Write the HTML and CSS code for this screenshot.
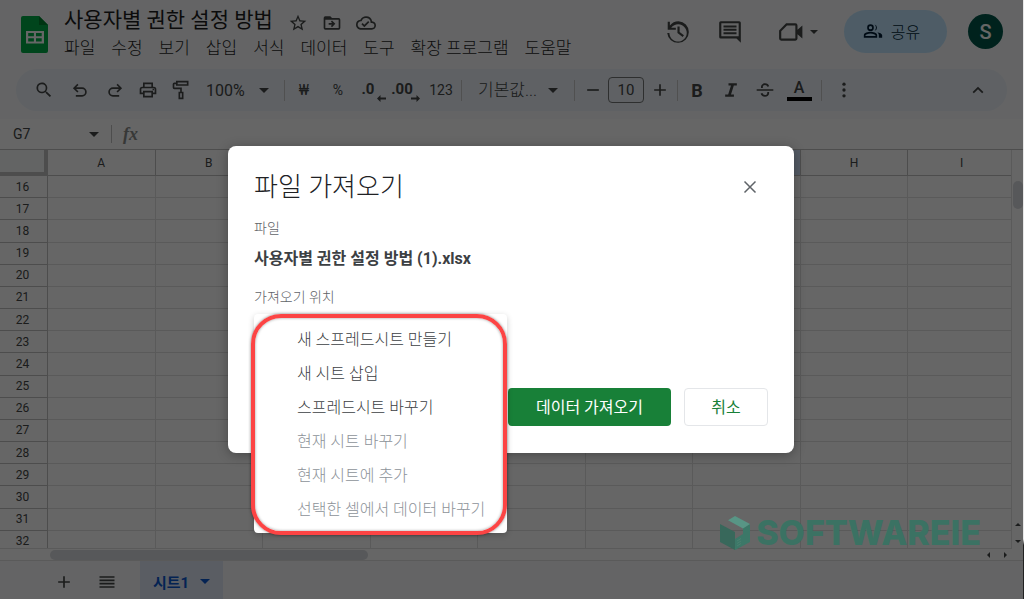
FILE: index.html
```html
<!DOCTYPE html>
<html lang="ko">
<head>
<meta charset="utf-8">
<title>사용자별 권한 설정 방법</title>
<meta name="viewport" content="width=device-width, initial-scale=1">
<link rel="stylesheet" href="styles.css">
</head>
<body>
<div class="app">
  <header class="header">
    <svg class="logo" viewBox="0 0 27 37" aria-hidden="true"><path fill="#00ac47" d="M2 0H18L27 9V35Q27 37 25 37H2Q0 37 0 35V2Q0 0 2 0Z"/><path fill="#00832d" d="M18 0L27 9H18Z"/><path fill="#fff" fill-rule="evenodd" d="M5 15H23V27.500H5ZM7.200 17V20.200H12.900V17ZM15 17V20.200H20.700V17ZM7.200 22.200V25.400H12.900V22.200ZM15 22.200V25.400H20.700V22.200Z"/></svg>
    <div class="doc">
      <div class="doc-line">
        <h1 class="doc-title">사용자별 권한 설정 방법</h1>
        <button class="mini" aria-label="별표"><svg viewBox="0 0 24 24"><path d="M22 9.240l-7.190-.620L12 2 9.190 8.630 2 9.240l5.460 4.730L5.820 21 12 17.270 18.180 21l-1.630-7.030zM12 15.400l-3.760 2.270 1-4.280-3.320-2.880 4.380-.380L12 6.100l1.710 4.040 4.380.380-3.320 2.880 1 4.280z"/></svg></button>
        <button class="mini" aria-label="이동"><svg viewBox="0 0 24 24"><path d="M20 6h-8l-2-2H4a2 2 0 0 0-2 2v12a2 2 0 0 0 2 2h16a2 2 0 0 0 2-2V8a2 2 0 0 0-2-2zm0 12H4V8h16zm-8-1 4-4-4-4-1.400 1.400 1.600 1.600H8v2h4.200l-1.600 1.600z"/></svg></button>
        <button class="mini" aria-label="문서 상태"><svg viewBox="0 0 24 24"><path d="M19.350 10.040A7.490 7.490 0 0 0 12 4C9.110 4 6.600 5.640 5.350 8.040A5.994 5.994 0 0 0 0 14c0 3.310 2.690 6 6 6h13c2.760 0 5-2.240 5-5 0-2.640-2.050-4.780-4.650-4.960zM19 18H6c-2.210 0-4-1.790-4-4s1.790-4 4-4h.710A5.500 5.500 0 0 1 17.500 11.500v.500H19a3 3 0 0 1 0 6zm-9-3.820-2.090-2.090L6.500 13.500 10 17l6.010-6.010-1.410-1.410z"/></svg></button>
      </div>
      <nav class="menus">
        <button>파일</button><button>수정</button><button>보기</button><button>삽입</button><button>서식</button><button>데이터</button><button>도구</button><button>확장 프로그램</button><button>도움말</button>
      </nav>
    </div>
    <div class="actions">
      <button class="round" aria-label="버전 기록"><svg viewBox="0 0 24 24"><path d="M12.500 2A10 10 0 0 0 4.500 6V2.500h-2V10H10V8H5.700A8 8 0 1 1 4.060 13H2.040A10 10 0 1 0 12.500 2zM11.500 7v6l4.800 3.600 1.200-1.600-4-3V7z"/></svg></button>
      <button class="round" aria-label="댓글"><svg viewBox="0 0 24 24"><path d="M22 3.500A1.500 1.500 0 0 0 20.500 2h-17A1.500 1.500 0 0 0 2 3.500v13A1.500 1.500 0 0 0 3.500 18H18l4 4zM20 16H4V4h16zM6 6h12v1.800H6zm0 3.100h12v1.800H6zm0 3.100h12V14H6z"/></svg></button>
      <button class="round meet" aria-label="화상 회의"><svg viewBox="0 0 24 24"><path fill-rule="evenodd" d="M7.500 4H16a2 2 0 0 1 2 2v4l4.500-4v12L18 14v4a2 2 0 0 1-2 2H3a2 2 0 0 1-2-2v-7.500zM8.300 6 3 11.300V18h13V6z"/></svg><i class="caret"></i></button>
      <button class="share"><svg viewBox="0 0 24 24" aria-hidden="true"><path fill-rule="evenodd" d="M9 4a4 4 0 1 0 0 8 4 4 0 0 0 0-8zm0 2a2 2 0 1 1 0 4 2 2 0 0 1 0-4zM1 17c0-2.700 5.300-4 8-4s8 1.300 8 4v3H1zm2 1h12v-1c0-.600-3.100-2-6-2s-6 1.400-6 2zM14 4.200a4 4 0 0 1 0 7.600 6 6 0 0 0 0-7.600zM17 13.400c2.800.500 6 1.700 6 3.600v3h-4v-3c0-1.500-.8-2.700-2-3.600z"/></svg>공유</button>
      <button class="avatar" aria-label="계정">S</button>
    </div>
  </header>

  <div class="toolbar">
    <button class="tool" aria-label="검색"><svg viewBox="0 0 24 24"><path d="M15.500 14h-.8l-.3-.3a6.500 6.500 0 1 0-.7.700l.3.300v.8l5 5 1.500-1.500zm-6 0a4.500 4.500 0 1 1 0-9 4.500 4.500 0 0 1 0 9z"/></svg></button>
    <button class="tool wide" aria-label="실행취소"><svg viewBox="0 0 24 24"><path d="M7 20v-2h7.500a3.600 3.600 0 0 0 0-7.200H7.300l2.900 2.900-1.400 1.400L3.500 9.800l5.300-5.300 1.400 1.400-2.900 2.900h7.200a5.600 5.600 0 0 1 0 11.200z"/></svg></button>
    <button class="tool redo" aria-label="재실행"><svg viewBox="0 0 24 24"><path d="M17 20v-2H9.500a3.600 3.600 0 0 1 0-7.200h7.200l-2.900 2.900 1.400 1.400 5.300-5.300-5.300-5.300-1.400 1.400 2.900 2.900H9.500a5.600 5.600 0 0 0 0 11.200z"/></svg></button>
    <button class="tool" aria-label="인쇄"><svg viewBox="0 0 24 24"><path fill-rule="evenodd" d="M6 3h12v5h1a3 3 0 0 1 3 3v6h-4v4H6v-4H2v-6a3 3 0 0 1 3-3h1zm2 2v3h8V5zm-3 5a1 1 0 0 0-1 1v4h2v-2h12v2h2v-4a1 1 0 0 0-1-1zm3 5v4h8v-4zm9.500-4.500h1.800v1.800h-1.800z"/></svg></button>
    <button class="tool redo" aria-label="서식 복사"><svg viewBox="0 0 24 24"><path fill-rule="evenodd" d="M6 1h15v6H6V5H4v4h9v5h2v9H9v-9h2v-3H4a2 2 0 0 1-2-2V5a2 2 0 0 1 2-2h2zm2 2v2h11V3zm3 13v5h2v-5z"/></svg></button>
    <label class="pick zoom"><select aria-label="확대/축소"><option>100%</option></select><i class="caret"></i></label>
    <span class="sep"></span>
    <button class="tool txt">₩</button>
    <button class="tool txt">%</button>
    <button class="tool dec" aria-label="소수점 이하 자릿수 감소"><b>.0</b><svg viewBox="0 0 9 7"><path d="M3.500 0 0 3.500 3.500 7V4.400H9V2.600H3.500z"/></svg></button>
    <button class="tool dec" aria-label="소수점 이하 자릿수 증가"><b>.00</b><svg viewBox="0 0 9 7"><path d="M5.500 0 9 3.500 5.500 7V4.400H0V2.600h5.500z"/></svg></button>
    <button class="tool txt num">123</button>
    <span class="sep"></span>
    <label class="pick font"><select aria-label="글꼴"><option>기본값...</option></select><i class="caret"></i></label>
    <span class="sep"></span>
    <button class="tool step" aria-label="글꼴 크기 줄이기"><svg viewBox="0 0 24 24"><path d="M5 11h14v2H5z"/></svg></button>
    <input class="size" aria-label="글꼴 크기" value="10">
    <button class="tool step" aria-label="글꼴 크기 늘리기"><svg viewBox="0 0 24 24"><path d="M11 5h2v6h6v2h-6v6h-2v-6H5v-2h6z"/></svg></button>
    <span class="sep"></span>
    <button class="tool bold">B</button>
    <button class="tool" aria-label="기울임꼴"><svg viewBox="0 0 24 24"><path d="M9 4h10v2.700h-3.600L12 17.300h3.500V20H5v-2.700h3.600L12 6.700H9z"/></svg></button>
    <button class="tool" aria-label="취소선"><svg viewBox="0 0 24 24"><path d="M2 11h20v2H2zM7.300 9.500C6.600 6.300 9 4 12 4c2.600 0 4.500 1.300 5 3.600l-2.200.6C14.500 6.900 13.500 6 12 6c-2 0-3 1.300-2.500 3.500zM16.900 14.500c.6 3.200-1.800 5.500-4.900 5.500-2.600 0-4.700-1.400-5.200-3.800l2.200-.6c.4 1.500 1.500 2.400 3 2.400 2 0 3-1.300 2.700-3.500z"/></svg></button>
    <button class="tool"><span class="ink">A</span></button>
    <span class="sep last"></span>
    <button class="tool" aria-label="더보기"><svg viewBox="0 0 24 24"><circle cx="12" cy="5" r="2"/><circle cx="12" cy="12" r="2"/><circle cx="12" cy="19" r="2"/></svg></button>
    <button class="tool fold" aria-label="메뉴 숨기기"><svg viewBox="0 0 24 24"><path d="M12 8l-6.500 6.500L7 16l5-5 5 5 1.500-1.500z"/></svg></button>
  </div>

  <div class="formula">
    <label class="namebox"><input aria-label="이름 상자" value="G7"><i class="caret"></i></label>
    <span class="fx">fx</span>
    <input class="formula-input" aria-label="수식">
  </div>

  <div class="sheet">
    <div class="cells">
      <table>
        <colgroup><col class="col-head"><col span="9"></colgroup>
        <thead><tr><td class="corner"></td><th>A</th><th>B</th><th>C</th><th>D</th><th>E</th><th>F</th><th class="on">G</th><th>H</th><th>I</th></tr></thead>
        <tbody>
          <tr><th>16</th><td></td><td></td><td></td><td></td><td></td><td></td><td></td><td></td><td></td></tr>
          <tr><th>17</th><td></td><td></td><td></td><td></td><td></td><td></td><td></td><td></td><td></td></tr>
          <tr><th>18</th><td></td><td></td><td></td><td></td><td></td><td></td><td></td><td></td><td></td></tr>
          <tr><th>19</th><td></td><td></td><td></td><td></td><td></td><td></td><td></td><td></td><td></td></tr>
          <tr><th>20</th><td></td><td></td><td></td><td></td><td></td><td></td><td></td><td></td><td></td></tr>
          <tr><th>21</th><td></td><td></td><td></td><td></td><td></td><td></td><td></td><td></td><td></td></tr>
          <tr><th>22</th><td></td><td></td><td></td><td></td><td></td><td></td><td></td><td></td><td></td></tr>
          <tr><th>23</th><td></td><td></td><td></td><td></td><td></td><td></td><td></td><td></td><td></td></tr>
          <tr><th>24</th><td></td><td></td><td></td><td></td><td></td><td></td><td></td><td></td><td></td></tr>
          <tr><th>25</th><td></td><td></td><td></td><td></td><td></td><td></td><td></td><td></td><td></td></tr>
          <tr><th>26</th><td></td><td></td><td></td><td></td><td></td><td></td><td></td><td></td><td></td></tr>
          <tr><th>27</th><td></td><td></td><td></td><td></td><td></td><td></td><td></td><td></td><td></td></tr>
          <tr><th>28</th><td></td><td></td><td></td><td></td><td></td><td></td><td></td><td></td><td></td></tr>
          <tr><th>29</th><td></td><td></td><td></td><td></td><td></td><td></td><td></td><td></td><td></td></tr>
          <tr><th>30</th><td></td><td></td><td></td><td></td><td></td><td></td><td></td><td></td><td></td></tr>
          <tr><th>31</th><td></td><td></td><td></td><td></td><td></td><td></td><td></td><td></td><td></td></tr>
          <tr><th>32</th><td></td><td></td><td></td><td></td><td></td><td></td><td></td><td></td><td></td></tr>
        </tbody>
      </table>
    </div>
    <div class="vbar"><span class="vthumb"></span><span class="arrow up"></span><span class="arrow down"></span></div>
  </div>
  <div class="hbar"><span class="hthumb"></span><span class="arrow left"></span><span class="arrow right"></span></div>

  <footer class="tabs">
    <button class="tab-tool" aria-label="시트 추가"><svg viewBox="0 0 24 24"><path d="M11 5h2v6h6v2h-6v6h-2v-6H5v-2h6z"/></svg></button>
    <button class="tab-tool" aria-label="전체 시트"><svg viewBox="0 0 24 24"><path d="M3 5h18v2H3zm0 4h18v2H3zm0 4h18v2H3zm0 4h18v2H3z"/></svg></button>
    <button class="tab">시트1<i class="caret"></i></button>
  </footer>
</div>

<div class="scrim">
  <section class="dialog" role="dialog" aria-labelledby="dialog-title">
    <div class="dialog-head">
      <h2 id="dialog-title">파일 가져오기</h2>
      <button class="close" aria-label="닫기"><svg viewBox="0 0 14 14"><path d="M1.500 1.500l11 11m0-11l-11 11"/></svg></button>
    </div>
    <p class="label">파일</p>
    <p class="filename">사용자별 권한 설정 방법 (1).xlsx</p>
    <p class="label" id="place">가져오기 위치</p>
    <div class="field">
      <ul class="options" aria-labelledby="place">
        <li><button>새 스프레드시트 만들기</button></li>
        <li><button>새 시트 삽입</button></li>
        <li><button>스프레드시트 바꾸기</button></li>
        <li><button disabled>현재 시트 바꾸기</button></li>
        <li><button disabled>현재 시트에 추가</button></li>
        <li><button disabled>선택한 셀에서 데이터 바꾸기</button></li>
      </ul>
    </div>
    <div class="buttons">
      <button class="primary">데이터 가져오기</button>
      <button class="secondary">취소</button>
    </div>
  </section>
</div>

<div class="brand">
  <svg viewBox="0 0 30 34" aria-hidden="true"><path fill="#38685b" d="M0 8l15 8v18L0 26z"/><path fill="#3c7868" d="M30 8l-7 4v6l-8 5v11l15-8z"/><path fill="#589585" d="M15 0l15 8-7 4.500L8 4.200z"/><path stroke="#4b8070" d="M17 25l4-2.500m-4 5l4-2.500m-4 5l4-2.500"/></svg>
  <span>SOFTWAREIE</span>
</div>
<div class="edge"></div>
</body>
</html>
```

FILE: styles.css
```css
* { box-sizing: border-box; }

body {
  margin: 0;
  height: 100vh;
  overflow: hidden;
  position: relative;
  background: #fff;
  color: #444746;
  font-family: Roboto, "Noto Sans CJK KR", sans-serif;
}

h1, h2, p, ul { margin: 0; padding: 0; font-weight: 400; }
ul { list-style: none; }
svg { display: block; fill: currentColor; flex: none; }

button, input, select {
  font: inherit;
  color: inherit;
  background: none;
  border: 0;
  padding: 0;
  margin: 0;
}

select { appearance: none; }

.app {
  height: 100%;
  display: flex;
  flex-direction: column;
  background: #f9fbfd;
}

.caret {
  flex: none;
  border: 5px solid transparent;
  border-top-color: currentColor;
  border-bottom: 0;
}

/* header */
.header {
  flex: none;
  height: 69px;
  display: flex;
  align-items: flex-start;
  padding: 0 21px;
}

.logo { width: 27px; height: 37px; margin-top: 16px; }
.doc { margin-left: 16px; padding-top: 5px; }
.doc-line { display: flex; align-items: center; height: 30px; }
.doc-title { font-size: 21px; line-height: 30px; color: #1f1f1f; margin-right: 8px; }
.mini { width: 34px; display: flex; justify-content: center; padding-top: 6px; }
.mini svg { width: 20px; height: 20px; }
.menus { display: flex; gap: 16px; margin-top: 1px; font-size: 17px; line-height: 24px; color: #1f1f1f; font-weight: 300; white-space: nowrap; }

.actions { margin-left: auto; display: flex; align-items: center; padding-top: 10px; }
.round { width: 52px; height: 42px; display: flex; align-items: center; justify-content: center; }
.round svg { width: 26px; height: 26px; }
.meet { width: 88px; gap: 6px; padding-right: 4px; }
.meet .caret { border-width: 4px; border-bottom: 0; }
.share {
  width: 103px;
  height: 43px;
  border-radius: 22px;
  background: #c2e7ff;
  color: #001d35;
  display: flex;
  align-items: center;
  justify-content: center;
  gap: 8px;
  padding: 0 8px 2px 0;
  font-size: 16px;
  font-weight: 300;
}
.share svg { width: 20px; height: 20px; }
.avatar {
  width: 35px;
  height: 35px;
  margin-left: 21px;
  border-radius: 50%;
  background: #00564a;
  color: #fff;
  font-size: 20px;
  font-weight: 500;
}

/* toolbar */
.toolbar {
  flex: none;
  height: 42px;
  margin: 0 17px 8px 16px;
  padding: 0 12px 0 11px;
  border-radius: 21px;
  background: #edf2fa;
  display: flex;
  align-items: center;
}
.tool { flex: none; width: 34px; height: 34px; display: flex; align-items: center; justify-content: center; }
.tool > svg { width: 20px; height: 20px; }
.wide { width: 38px; }
.redo { width: 32px; }
.txt { font-size: 14px; }
.num { width: 36px; }
.sep { flex: none; width: 1px; height: 21px; margin: 0 2px; background: #c7c7c7; }
.last { margin: 0 5px; }
.pick { flex: none; display: flex; align-items: center; }
.zoom { width: 85px; padding-left: 9px; font-size: 16px; }
.zoom select { width: 53px; }
.font { width: 108px; padding-left: 14px; font-size: 17px; font-weight: 300; }
.font select { width: 70px; }
.caret + .sep, .pick .caret { border-width: 5px; border-bottom: 0; }
.tool.dec { flex-direction: column; align-items: flex-end; padding: 3px 8px 0 0; }
.dec b { font-size: 15px; line-height: 15px; font-weight: 700; align-self: center; }
.tool.dec svg { width: 9px; height: 7px; margin-right: -5px; margin-top: -2px; }
.step { width: 31px; }
.size { width: 36px; height: 26px; border: 1px solid #747775; border-radius: 4px; text-align: center; font-size: 15px; }
.bold { font-weight: 700; font-size: 18px; }
.ink { width: 25px; border-bottom: 4px solid #000; font-size: 16px; line-height: 18px; text-align: center; font-weight: 500; }
.fold { margin-left: auto; }

/* formula bar */
.formula { flex: none; height: 31px; display: flex; align-items: center; background: #fff; border-bottom: 1px solid #c0c0c0; }
.namebox { width: 112px; height: 18px; padding: 0 12px 0 13px; display: flex; align-items: center; border-right: 1px solid #c0c0c0; font-size: 14px; }
.namebox input { flex: 1; min-width: 0; }
.fx { width: 40px; padding-left: 11px; font: italic 700 18px "Liberation Serif", serif; color: #8a8d8b; }
.formula-input { flex: 1; }

/* grid */
.sheet { flex: 1; min-height: 0; display: flex; background: #fff; }
.cells { flex: 1; min-width: 0; overflow: hidden; border-bottom: 1px solid #e1e1e1; }
.cells table { width: calc(100% + 5px); height: calc(100% + 5px); table-layout: fixed; border-collapse: separate; border-spacing: 0; }
.col-head { width: 48px; }
.cells td, .cells th { padding: 0; border-right: 1px solid #e1e1e1; border-bottom: 1px solid #e1e1e1; font-size: 12px; line-height: 14px; font-weight: 400; }
.cells thead tr { height: 26px; }
.cells thead th, .cells tbody th { border-color: #c0c0c0; }
.cells tbody th { padding-right: 2px; }
.cells .corner { background: #f8f9fa; border-right: 4px solid #c0c0c0; border-bottom: 4px solid #c0c0c0; }
.cells .on { background: #d3e3fd; }
.vbar { flex: none; width: 13px; border-left: 1px solid #e1e1e1; display: flex; flex-direction: column; align-items: center; padding-top: 31px; gap: 14px; padding-bottom: 6px; }
.vthumb { width: 10px; height: 28px; border-radius: 5px; background: #dadce0; margin-bottom: auto; }
.hbar { flex: none; height: 12px; display: flex; align-items: center; padding: 0 17px 0 50px; gap: 14px; border-bottom: 1px solid #e1e1e1; background: #fff; }
.hthumb { width: 318px; height: 10px; border-radius: 5px; background: #dadce0; margin-right: auto; }
.arrow { border: 3px solid transparent; }
.up { border-bottom-color: #444746; border-top: 0; }
.down { border-top-color: #444746; border-bottom: 0; }
.left { border-right-color: #444746; border-left: 0; }
.right { border-left-color: #444746; border-right: 0; }

/* sheet tabs */
.tabs { flex: none; height: 38px; display: flex; align-items: stretch; padding-left: 42px; }
.tab-tool { width: 43px; display: flex; align-items: center; justify-content: center; padding-top: 3px; }
.tab-tool svg { width: 20px; height: 20px; }
.tab { width: 83px; margin-left: 12px; padding-top: 3px; background: #e1e9f7; color: #0b57d0; font-size: 15px; font-weight: 700; display: flex; align-items: center; justify-content: center; gap: 11px; }

/* import dialog */
.scrim { position: absolute; inset: 0 1px 0 0; padding-right: 1px; background: rgba(0, 0, 0, 0.6); display: grid; place-items: center; }
.dialog { width: 566px; max-width: 100%; padding: 22px 26px 27px; border-radius: 8px; background: #fff; box-shadow: 0 2px 12px rgba(0, 0, 0, 0.3); color: #3c4043; }
.dialog-head { display: flex; align-items: center; justify-content: space-between; height: 38px; }
.dialog h2 { font-size: 26px; line-height: 38px; font-weight: 300; color: #202124; }
.close { width: 36px; height: 36px; display: grid; place-items: center; }
.close svg { width: 14px; height: 14px; stroke: #5f6368; stroke-width: 1.5; }
.label { font-size: 14px; line-height: 20px; font-weight: 300; color: #5f6368; margin-top: 12px; }
.filename { font-size: 16px; line-height: 22px; font-weight: 700; margin: 10px 0 17px; }
.field { position: relative; height: 81px; }
.options {
  position: absolute;
  top: 7px;
  left: 0;
  width: 253px;
  padding: 7px 0 8px;
  background: #fff;
  border-radius: 4px;
  box-shadow: 0 2px 6px rgba(0, 0, 0, 0.2);
}
.options::after {
  content: "";
  position: absolute;
  inset: 0 0 -2px -3px;
  border: 4px solid #fc4444;
  border-radius: 30px;
  box-shadow: 0 0 3px rgba(0, 0, 0, 0.5), inset 0 0 3px rgba(0, 0, 0, 0.4);
  pointer-events: none;
}
.options button { width: 100%; height: 34px; padding-left: 43px; text-align: left; font-size: 16px; font-weight: 300; white-space: nowrap; }
.options button:disabled { color: #8d9399; }
.buttons { display: flex; justify-content: flex-end; gap: 13px; }
.buttons button { height: 38px; border-radius: 4px; padding-bottom: 2px; font-size: 16px; }
.primary { width: 163px; background: #188038; color: #fff; }
.secondary { width: 84px; color: #188038; }
.buttons .secondary { border: 1px solid #e4e6e9; }

/* overlays */
.brand { position: absolute; right: 43px; bottom: 49px; display: flex; align-items: center; gap: 6px; color: #3b7263; font: 800 34px/34px Inter, sans-serif; }
.brand svg { width: 30px; height: 34px; }
.edge { position: absolute; top: 0; right: 0; width: 1px; height: 100%; background: linear-gradient(#e8e8e8 90%, #222 91%); }
```
